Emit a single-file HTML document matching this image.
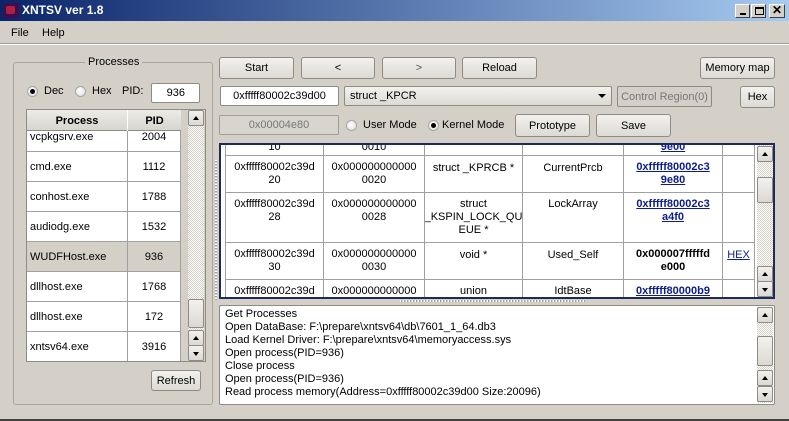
<!DOCTYPE html>
<html><head><meta charset="utf-8"><style>
*{box-sizing:border-box;margin:0;padding:0}
body{width:789px;height:421px;background:#d4d0c8;font-family:"Liberation Sans",sans-serif;font-size:11px;color:#000;position:relative;overflow:hidden}
.a{position:absolute}
.btn{position:absolute;border:1px solid #8e8b85;border-radius:3px;background:linear-gradient(#f2f1ee,#dddad4);text-align:center;font-size:11px;display:flex;align-items:center;justify-content:center}
.inp{position:absolute;background:#fff;border:1px solid #8e8b85;border-radius:2px;display:flex;align-items:center;justify-content:center}
.radio{position:absolute;width:11px;height:11px;border-radius:50%;background:radial-gradient(circle at 40% 40%,#fff,#dcdcdc);border:1px solid #a8a6a0}
.radio.on::after{content:"";position:absolute;left:2px;top:2px;width:5px;height:5px;border-radius:50%;background:#000}
.sb{position:absolute;background:repeating-conic-gradient(#fff 0 25%,#d4d0c8 0 50%) 0 0/2px 2px}
.arr{position:absolute;left:0;width:16px;height:16px;background:linear-gradient(#f2f1ee,#dcd9d3);border:1px solid #8e8b85;border-radius:2px}
.up::after,.dn::after{content:"";position:absolute;left:4px;border-left:3.5px solid transparent;border-right:3.5px solid transparent}
.up::after{top:5px;border-bottom:4px solid #000}
.dn::after{top:6px;border-top:4px solid #000}
.cell{position:absolute;display:flex;align-items:center;justify-content:center;text-align:center;line-height:13px;border-right:1px solid #a0a0a0;border-bottom:1px solid #a0a0a0;overflow:hidden}
.lk{color:#0c1c8c;font-weight:bold;text-decoration:underline}
</style></head><body>
<div class="a" style="left:0;top:0;width:789px;height:21px;background:linear-gradient(90deg,#0a246a,#a6caf0)"></div>
<div class="a" style="left:3px;top:3px;width:16px;height:15px;background:#3a1050"><div class="a" style="left:3px;top:3px;width:9px;height:8px;background:#b02040;border-radius:2px"></div></div>
<div class="a" style="left:22px;top:3px;color:#fff;font-weight:bold;font-size:12px">XNTSV ver 1.8</div>
<div class="a" style="left:735px;top:4px;width:15px;height:14px;background:#d4d0c8;border:1px solid;border-color:#fff #404040 #404040 #fff"><div class="a" style="left:4px;top:8px;width:6px;height:2px;background:#000"></div></div>
<div class="a" style="left:751px;top:4px;width:15px;height:14px;background:#d4d0c8;border:1px solid;border-color:#fff #404040 #404040 #fff"><div class="a" style="left:3px;top:2px;width:9px;height:8px;border:1px solid #000;border-top-width:2px"></div></div>
<div class="a" style="left:769px;top:4px;width:16px;height:14px;background:#d4d0c8;border:1px solid;border-color:#fff #404040 #404040 #fff;font-weight:bold;font-size:12px;line-height:11px;text-align:center">✕</div>
<div class="a" style="left:11px;top:27px;font-size:11px">File</div>
<div class="a" style="left:42px;top:27px">Help</div>
<div class="a" style="left:0;top:43px;width:789px;height:1px;background:#a0a09a"></div>
<div class="a" style="left:0;top:44px;width:789px;height:1px;background:#fff"></div>
<div class="a" style="left:13px;top:62px;width:200px;height:343px;border:1px solid #a8a59e;border-radius:3px"></div>
<div class="a" style="left:85px;top:56px;background:#d4d0c8;padding:0 3px">Processes</div>
<div class="radio on" style="left:27px;top:86px"></div>
<div class="a" style="left:44px;top:85px">Dec</div>
<div class="radio" style="left:75px;top:86px"></div>
<div class="a" style="left:92px;top:85px">Hex</div>
<div class="a" style="left:122px;top:85px">PID:</div>
<div class="inp" style="left:151px;top:83px;width:49px;height:20px;justify-content:flex-end;padding-right:14px">936</div>
<div class="a" style="left:26px;top:109px;width:180px;height:253px;border:1px solid #8e8b85;background:#fff;overflow:hidden">
 <div class="a" style="left:0;top:0;width:154px;height:21px;background:linear-gradient(#ecebe7,#d8d5ce);border-bottom:1px solid #8e8b85"></div>
 <div class="a" style="left:0;top:0;width:101px;height:21px;border-right:1px solid #fff;font-weight:bold;display:flex;align-items:center;justify-content:center">Process</div>
 <div class="a" style="left:101px;top:0;width:53px;height:21px;font-weight:bold;display:flex;align-items:center;justify-content:center">PID</div>
 <div class="a" style="left:0;top:131px;width:154px;height:30px;background:#d4d0c8"></div>
 <div class="a" style="left:100px;top:21px;width:1px;height:240px;background:#a0a0a0"></div>
 <div class="a" style="left:153px;top:21px;width:1px;height:240px;background:#a0a0a0"></div>
 <div class="a" style="left:154px;top:0;width:25px;height:260px;background:#d4d0c8"></div>
 <div class="a" style="left:3px;top:21px">vcpkgsrv.exe</div><div class="a" style="left:101px;top:21px;width:52px;text-align:center">2004</div>
 <div class="a" style="left:0;top:41px;width:154px;height:1px;background:#a0a0a0"></div>
 <div class="a" style="left:3px;top:51px">cmd.exe</div><div class="a" style="left:101px;top:51px;width:52px;text-align:center">1112</div>
 <div class="a" style="left:0;top:71px;width:154px;height:1px;background:#a0a0a0"></div>
 <div class="a" style="left:3px;top:81px">conhost.exe</div><div class="a" style="left:101px;top:81px;width:52px;text-align:center">1788</div>
 <div class="a" style="left:0;top:101px;width:154px;height:1px;background:#a0a0a0"></div>
 <div class="a" style="left:3px;top:111px">audiodg.exe</div><div class="a" style="left:101px;top:111px;width:52px;text-align:center">1532</div>
 <div class="a" style="left:0;top:131px;width:154px;height:1px;background:#a0a0a0"></div>
 <div class="a" style="left:3px;top:141px">WUDFHost.exe</div><div class="a" style="left:101px;top:141px;width:52px;text-align:center">936</div>
 <div class="a" style="left:0;top:161px;width:154px;height:1px;background:#a0a0a0"></div>
 <div class="a" style="left:3px;top:171px">dllhost.exe</div><div class="a" style="left:101px;top:171px;width:52px;text-align:center">1768</div>
 <div class="a" style="left:0;top:191px;width:154px;height:1px;background:#a0a0a0"></div>
 <div class="a" style="left:3px;top:201px">dllhost.exe</div><div class="a" style="left:101px;top:201px;width:52px;text-align:center">172</div>
 <div class="a" style="left:0;top:221px;width:154px;height:1px;background:#a0a0a0"></div>
 <div class="a" style="left:3px;top:231px">xntsv64.exe</div><div class="a" style="left:101px;top:231px;width:52px;text-align:center">3916</div>
</div>
<div class="sb" style="left:188px;top:110px;width:16px;height:250px">
 <div class="arr up" style="top:0"></div>
 <div class="arr" style="top:189px;height:29px"></div>
 <div class="arr up" style="top:220px"></div>
 <div class="arr dn" style="top:235px"></div>
</div>
<div class="btn" style="left:151px;top:370px;width:50px;height:21px">Refresh</div>
<div class="a" style="left:215px;top:160px;width:2px;height:140px;background:repeating-linear-gradient(#fff 0 1px,#a0a0a0 1px 2px,transparent 2px 3px)"></div>
<div class="btn" style="left:219px;top:57px;width:75px;height:22px">Start</div>
<div class="btn" style="left:301px;top:57px;width:74px;height:22px">&lt;</div>
<div class="btn" style="left:382px;top:57px;width:74px;height:22px;color:#555">&gt;</div>
<div class="btn" style="left:462px;top:57px;width:75px;height:22px">Reload</div>
<div class="btn" style="left:700px;top:57px;width:75px;height:22px">Memory map</div>
<div class="inp" style="left:220px;top:86px;width:119px;height:20px">0xfffff80002c39d00</div>
<div class="btn" style="left:344px;top:86px;width:268px;height:20px;justify-content:flex-start;padding-left:5px;border-radius:2px">struct _KPCR<div class="a" style="right:5px;top:7px;border-left:4px solid transparent;border-right:4px solid transparent;border-top:4px solid #000"></div></div>
<div class="a" style="left:617px;top:86px;width:95px;height:21px;border:1px solid #8e8b85;border-radius:2px;color:#777;display:flex;align-items:center;justify-content:center">Control Region(0)</div>
<div class="btn" style="left:740px;top:86px;width:35px;height:22px">Hex</div>
<div class="a" style="left:219px;top:115px;width:120px;height:20px;border:1px solid #a09d96;border-radius:2px;color:#777;display:flex;align-items:center;justify-content:center;background:#d8d5cf">0x00004e80</div>
<div class="radio" style="left:346px;top:120px"></div>
<div class="a" style="left:363px;top:119px">User Mode</div>
<div class="radio on" style="left:428px;top:120px"></div>
<div class="a" style="left:442px;top:119px">Kernel Mode</div>
<div class="btn" style="left:515px;top:114px;width:75px;height:23px">Prototype</div>
<div class="btn" style="left:596px;top:114px;width:75px;height:23px">Save</div>
<div class="a" style="left:219px;top:143px;width:556px;height:156px;border:2px solid #1e2a5a;background:#fff;overflow:hidden">
 <div class="a" style="left:4px;top:-1px;width:1px;height:160px;background:#a0a0a0"></div>
 <div class="cell" style="left:5px;top:-27px;width:98px;height:38px;align-items:flex-end;padding-bottom:1px">10</div>
 <div class="cell" style="left:103px;top:-27px;width:101px;height:38px;align-items:flex-end;padding-bottom:1px">0010</div>
 <div class="cell" style="left:204px;top:-27px;width:98px;height:38px"></div>
 <div class="cell" style="left:302px;top:-27px;width:101px;height:38px"></div>
 <div class="cell lk" style="left:403px;top:-27px;width:99px;height:38px;align-items:flex-end;padding-bottom:1px">9e00</div>
 <div class="cell" style="left:502px;top:-27px;width:32px;height:38px"></div>
 <div class="cell" style="left:5px;top:11px;width:98px;height:37px">0xfffff80002c39d<br>20</div>
 <div class="cell" style="left:103px;top:11px;width:101px;height:37px">0x000000000000<br>0020</div>
 <div class="cell" style="left:204px;top:11px;width:98px;height:37px;align-items:flex-start;padding-top:6px">struct _KPRCB *</div>
 <div class="cell" style="left:302px;top:11px;width:101px;height:37px;align-items:flex-start;padding-top:6px">CurrentPrcb</div>
 <div class="cell lk" style="left:403px;top:11px;width:99px;height:37px">0xfffff80002c3<br>9e80</div>
 <div class="cell" style="left:502px;top:11px;width:32px;height:37px"></div>
 <div class="cell" style="left:5px;top:48px;width:98px;height:50px;align-items:flex-start;padding-top:5px">0xfffff80002c39d<br>28</div>
 <div class="cell" style="left:103px;top:48px;width:101px;height:50px;align-items:flex-start;padding-top:5px">0x000000000000<br>0028</div>
 <div class="cell" style="left:204px;top:48px;width:98px;height:50px;align-items:flex-start;padding-top:5px">struct<br>_KSPIN_LOCK_QU<br>EUE *</div>
 <div class="cell" style="left:302px;top:48px;width:101px;height:50px;align-items:flex-start;padding-top:5px">LockArray</div>
 <div class="cell lk" style="left:403px;top:48px;width:99px;height:50px;align-items:flex-start;padding-top:5px">0xfffff80002c3<br>a4f0</div>
 <div class="cell" style="left:502px;top:48px;width:32px;height:50px"></div>
 <div class="cell" style="left:5px;top:98px;width:98px;height:37px">0xfffff80002c39d<br>30</div>
 <div class="cell" style="left:103px;top:98px;width:101px;height:37px">0x000000000000<br>0030</div>
 <div class="cell" style="left:204px;top:98px;width:98px;height:37px;align-items:flex-start;padding-top:6px">void *</div>
 <div class="cell" style="left:302px;top:98px;width:101px;height:37px;align-items:flex-start;padding-top:6px">Used_Self</div>
 <div class="cell" style="left:403px;top:98px;width:99px;height:37px;font-weight:bold">0x000007fffffd<br>e000</div>
 <div class="cell" style="left:502px;top:98px;width:32px;height:37px;align-items:flex-start;padding-top:6px;color:#0c1c8c;text-decoration:underline">HEX</div>
 <div class="cell" style="left:5px;top:135px;width:98px;height:37px;align-items:flex-start;padding-top:5px">0xfffff80002c39d</div>
 <div class="cell" style="left:103px;top:135px;width:101px;height:37px;align-items:flex-start;padding-top:5px">0x000000000000</div>
 <div class="cell" style="left:204px;top:135px;width:98px;height:37px;align-items:flex-start;padding-top:5px">union</div>
 <div class="cell" style="left:302px;top:135px;width:101px;height:37px;align-items:flex-start;padding-top:5px">IdtBase</div>
 <div class="cell lk" style="left:403px;top:135px;width:99px;height:37px;align-items:flex-start;padding-top:5px">0xfffff80000b9</div>
 <div class="cell" style="left:502px;top:135px;width:32px;height:37px"></div>
 <div class="sb" style="left:536px;top:0;width:16px;height:152px">
  <div class="arr up" style="top:1px"></div>
  <div class="arr" style="top:32px;height:26px"></div>
  <div class="arr up" style="top:121px"></div>
  <div class="arr dn" style="top:136px"></div>
 </div>
</div>
<div class="a" style="left:400px;top:300px;width:185px;height:2px;background:repeating-linear-gradient(90deg,#fff 0 1px,#a0a0a0 1px 2px,transparent 2px 3px)"></div>
<div class="a" style="left:219px;top:305px;width:556px;height:100px;border:1px solid #8e8b85;border-radius:2px;background:#fff;overflow:hidden">
 <div class="a" style="left:5px;top:2px;line-height:13px;font-size:11px">Get Processes<br>Open DataBase: F:\prepare\xntsv64\db\7601_1_64.db3<br>Load Kernel Driver: F:\prepare\xntsv64\memoryaccess.sys<br>Open process(PID=936)<br>Close process<br>Open process(PID=936)<br>Read process memory(Address=0xfffff80002c39d00 Size:20096)</div>
 <div class="sb" style="left:537px;top:1px;width:16px;height:96px">
  <div class="arr up" style="top:0"></div>
  <div class="arr" style="top:29px;height:30px"></div>
  <div class="arr up" style="top:63px"></div>
  <div class="arr dn" style="top:79px"></div>
 </div>
</div>
<div class="a" style="left:0;top:419px;width:789px;height:2px;background:#404040"></div>
</body></html>
